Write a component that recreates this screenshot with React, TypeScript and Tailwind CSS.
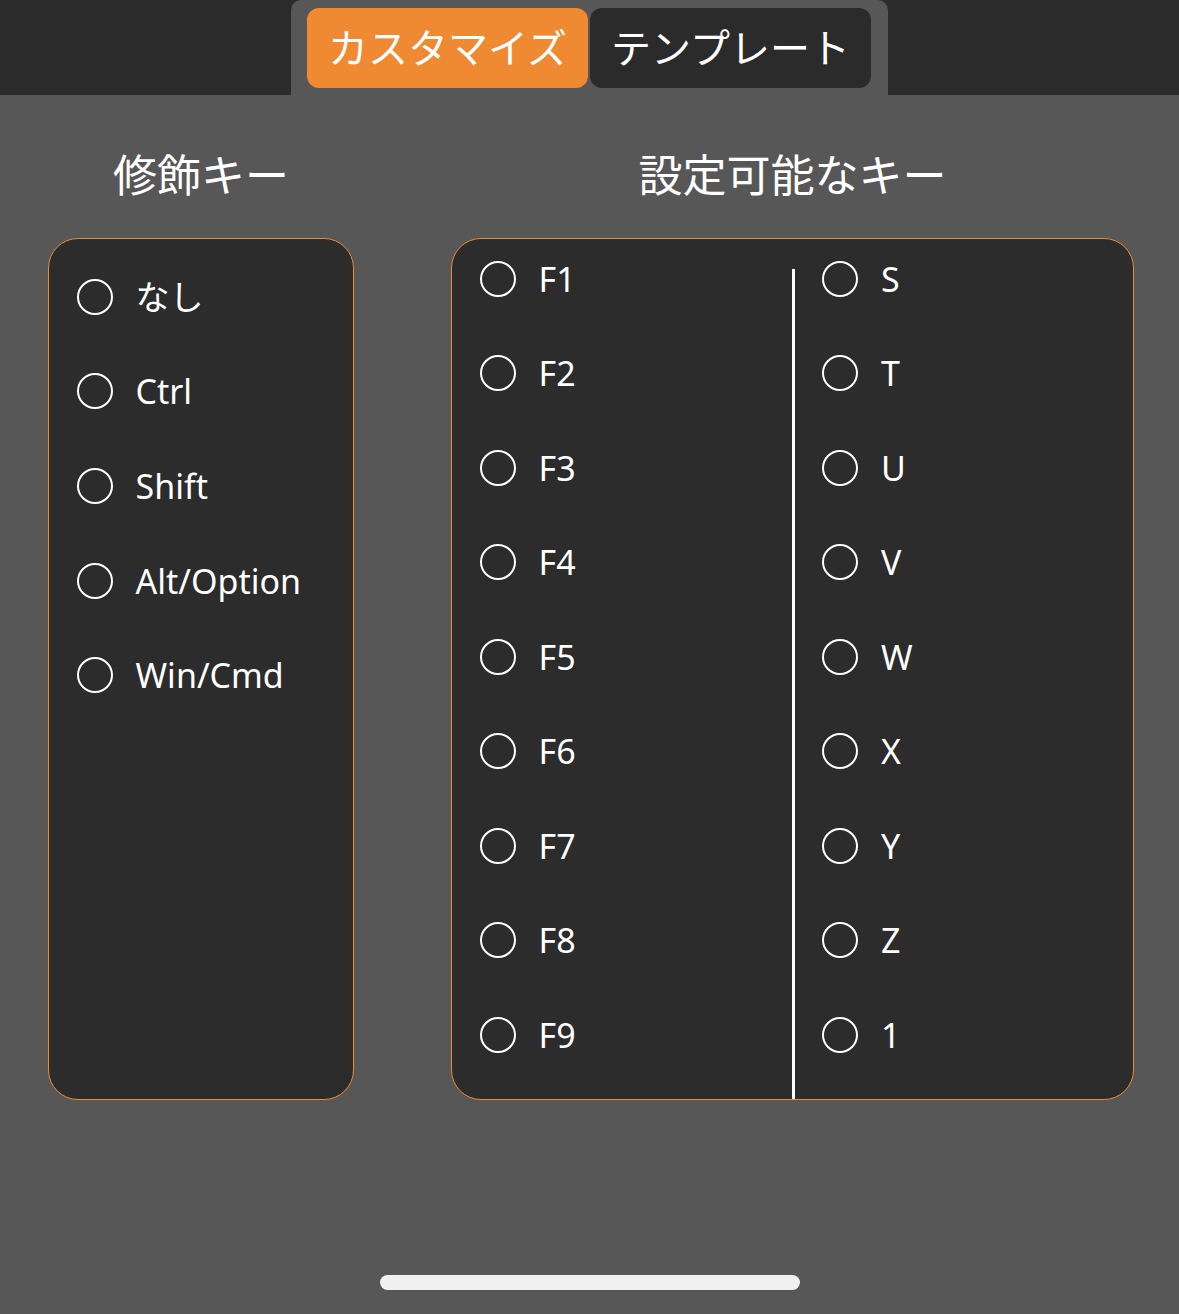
const modifierKeys: string[] = ['なし', 'Ctrl', 'Shift', 'Alt/Option', 'Win/Cmd']
const leftKeys: string[] = ['F1', 'F2', 'F3', 'F4', 'F5', 'F6', 'F7', 'F8', 'F9']
const rightKeys: string[] = ['S', 'T', 'U', 'V', 'W', 'X', 'Y', 'Z', '1']

const font = 'font-["Noto_Sans","Noto_Sans_CJK_JP",sans-serif]'

function RadioRow({ label }: { label: string }) {
  return (
    <div className="flex items-center h-9 gap-[23px]">
      <span className="w-9 h-9 rounded-full border-2 border-white shrink-0" />
      <span className="text-[34px] leading-none text-white">{label}</span>
    </div>
  )
}

export default function App() {
  return (
    <div className={`w-[1179px] h-[1314px] bg-[#575757] flex flex-col ${font}`}>
      {/* Top bar with segmented tabs */}
      <div className="h-[95px] bg-[#2b2b2b] flex justify-center shrink-0">
        <div className="w-[597px] h-full bg-[#575757] rounded-t-[10px] flex gap-[2px] pl-4 pr-[17px] pt-2 pb-[7px]">
          <div className="flex-1 rounded-[12px] bg-[#ef8a33] flex items-center justify-center text-[40px] text-white">
            カスタマイズ
          </div>
          <div className="flex-1 rounded-[12px] bg-[#2b2b2b] flex items-center justify-center text-[40px] text-white">
            テンプレート
          </div>
        </div>
      </div>

      <div className="flex pl-12 gap-[97px]">
        {/* Modifier keys */}
        <div className="w-[306px] flex flex-col">
          <h2 className="mt-[50px] mb-[33px] h-[60px] leading-[60px] text-center text-[44px] text-white font-normal">
            修飾キー
          </h2>
          <div className="h-[862px] rounded-[30px] border-[1.5px] border-[#ef8a33] bg-[#2c2c2c] pt-[39.5px] pl-[27.5px] flex flex-col gap-[58.7px]">
            {modifierKeys.map((k) => (
              <RadioRow key={k} label={k} />
            ))}
          </div>
        </div>

        {/* Assignable keys */}
        <div className="w-[683px] flex flex-col">
          <h2 className="mt-[50px] mb-[33px] h-[60px] leading-[60px] text-center text-[44px] text-white font-normal">
            設定可能なキー
          </h2>
          <div className="h-[862px] rounded-[30px] border-[1.5px] border-[#ef8a33] bg-[#2c2c2c] flex">
            <div className="w-[340px] pt-[21.5px] pl-[27.5px] flex flex-col gap-[58.5px]">
              {leftKeys.map((k) => (
                <RadioRow key={k} label={k} />
              ))}
            </div>
            <div className="w-[3px] bg-white mt-[29.5px]" />
            <div className="flex-1 pt-[21.5px] pl-[27px] flex flex-col gap-[58.5px]">
              {rightKeys.map((k) => (
                <RadioRow key={k} label={k} />
              ))}
            </div>
          </div>
        </div>
      </div>

      {/* Home indicator */}
      <div className="flex justify-center mt-[175px]">
        <div className="w-[420px] h-[15px] rounded-full bg-[#f0f0f0]" />
      </div>
    </div>
  )
}
